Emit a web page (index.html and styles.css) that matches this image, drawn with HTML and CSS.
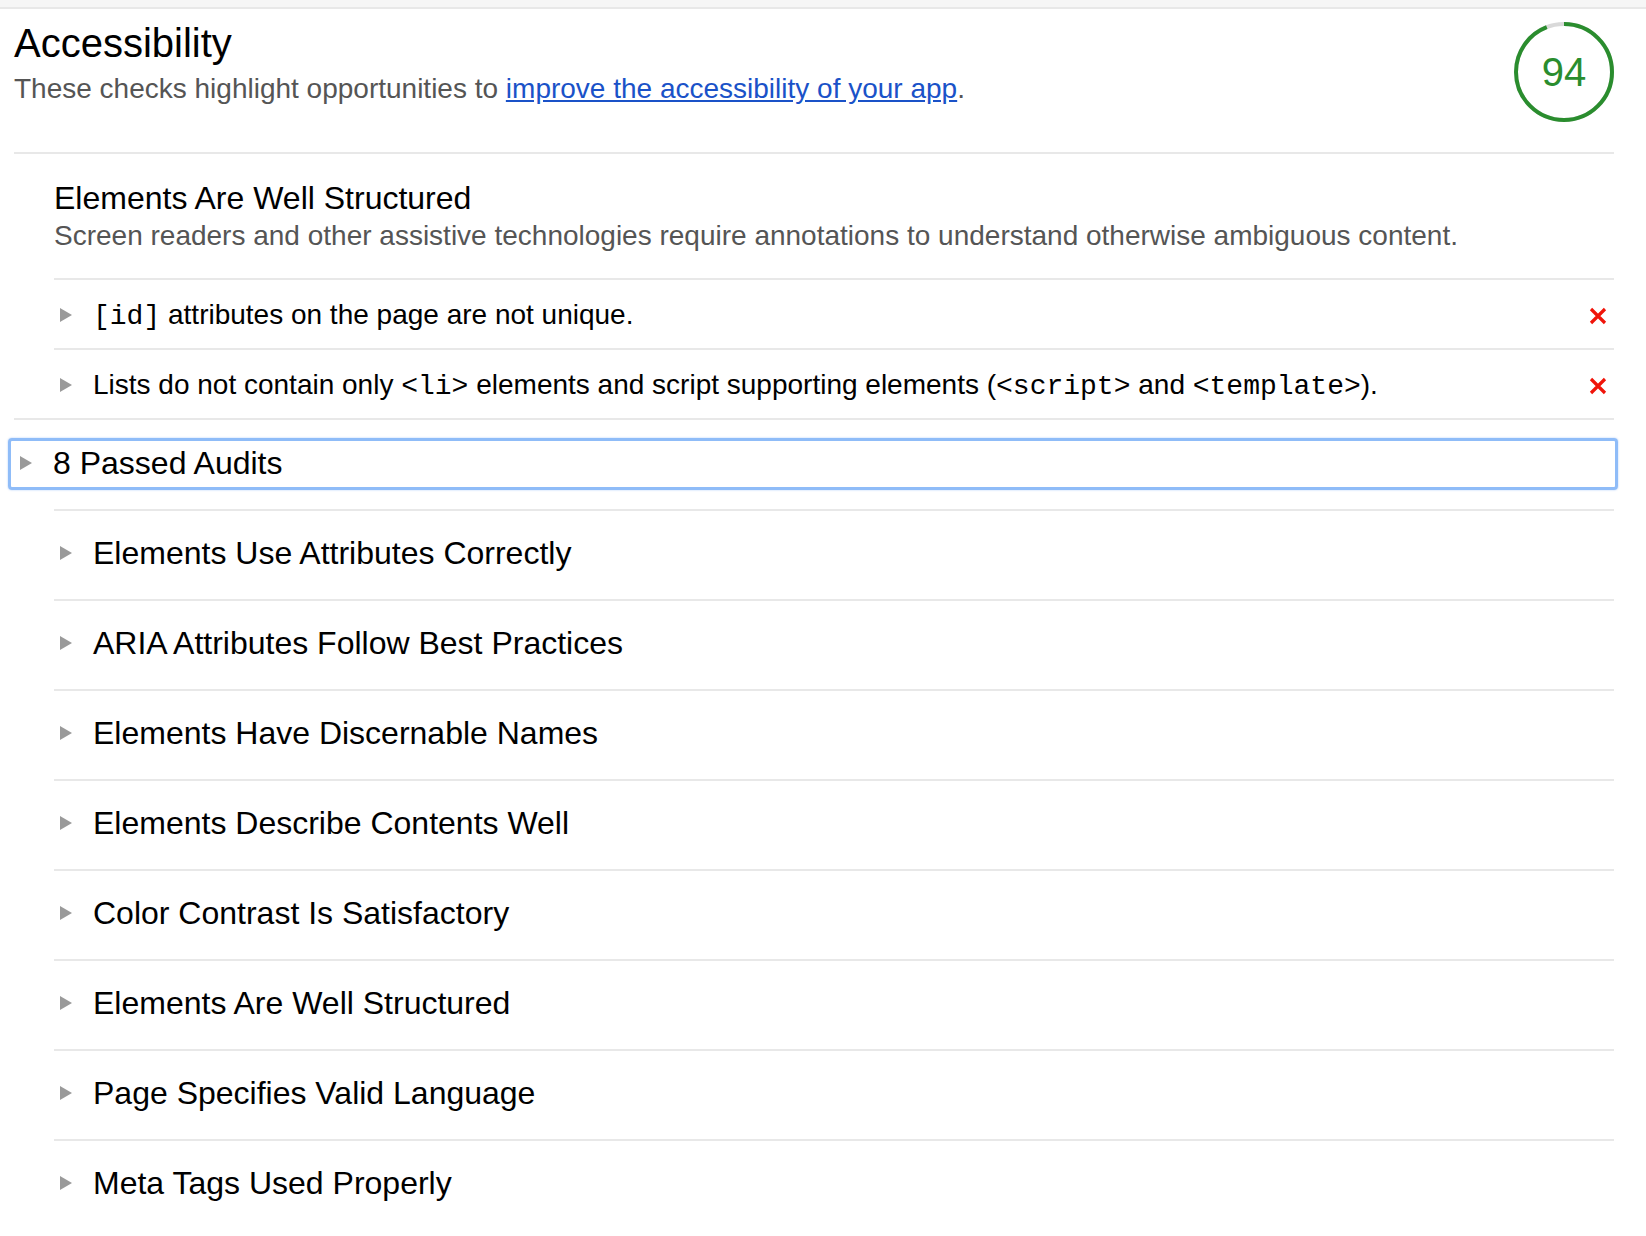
FILE: index.html
```html
<!DOCTYPE html>
<html lang="en">
<head>
<meta charset="utf-8">
<title>Accessibility</title>
<link rel="stylesheet" href="styles.css">
</head>
<body>
<div class="topbar"></div>
<main class="category">
  <header class="cat-header">
    <div class="cat-text">
      <h1 class="cat-title">Accessibility</h1>
      <p class="cat-desc">These checks highlight opportunities to <a href="#" class="link">improve the accessibility of your app</a>.</p>
    </div>
    <div class="gauge">
      <svg class="gauge-ring" viewBox="0 0 100 100" width="100" height="100">
        <circle cx="50" cy="50" r="48" fill="none" stroke="#d9d9d9" stroke-width="4"/>
        <circle cx="50" cy="50" r="48" fill="none" stroke="#2a8d2e" stroke-width="4" stroke-dasharray="283.5 301.6" transform="rotate(-90 50 50)"/>
      </svg>
      <span class="gauge-value">94</span>
    </div>
  </header>

  <section class="group">
    <div class="group-inner">
      <div class="group-header">
        <h2 class="group-title">Elements Are Well Structured</h2>
        <p class="group-desc">Screen readers and other assistive technologies require annotations to understand otherwise ambiguous content.</p>
      </div>
      <div class="audit">
        <span class="tri"></span>
        <span class="audit-text"><code>[id]</code> attributes on the page are not unique.</span>
        <svg class="fail-x" viewBox="0 0 18 18"><path d="M2 2 L16 16 M16 2 L2 16" stroke="#f0140a" stroke-width="3.2" fill="none"/></svg>
      </div>
      <div class="audit">
        <span class="tri"></span>
        <span class="audit-text">Lists do not contain only <code>&lt;li&gt;</code> elements and script supporting elements (<code>&lt;script&gt;</code> and <code>&lt;template&gt;</code>).</span>
        <svg class="fail-x" viewBox="0 0 18 18"><path d="M2 2 L16 16 M16 2 L2 16" stroke="#f0140a" stroke-width="3.2" fill="none"/></svg>
      </div>
    </div>
  </section>

  <section class="passed">
    <div class="passed-summary"><span class="tri tri-summary"></span><span>8 Passed Audits</span></div>
    <div class="passed-list">
      <div class="passed-row"><span class="tri"></span><span>Elements Use Attributes Correctly</span></div>
      <div class="passed-row"><span class="tri"></span><span>ARIA Attributes Follow Best Practices</span></div>
      <div class="passed-row"><span class="tri"></span><span>Elements Have Discernable Names</span></div>
      <div class="passed-row"><span class="tri"></span><span>Elements Describe Contents Well</span></div>
      <div class="passed-row"><span class="tri"></span><span>Color Contrast Is Satisfactory</span></div>
      <div class="passed-row"><span class="tri"></span><span>Elements Are Well Structured</span></div>
      <div class="passed-row"><span class="tri"></span><span>Page Specifies Valid Language</span></div>
      <div class="passed-row"><span class="tri"></span><span>Meta Tags Used Properly</span></div>
    </div>
  </section>
</main>
</body>
</html>
```

FILE: styles.css
```css
* { box-sizing: border-box; }

body {
  margin: 0;
  font-family: "Liberation Sans", Arial, sans-serif;
  color: #000;
  background: #fff;
}

.topbar {
  height: 9px;
  background: #f6f6f6;
  border-bottom: 2px solid #e8e8e8;
}

.category {
  padding: 0 32px 0 14px;
}

.cat-header {
  display: flex;
  justify-content: space-between;
  align-items: flex-start;
  height: 145px;
  padding-top: 10px;
  border-bottom: 2px solid #e8e8e8;
}

.cat-title {
  margin: 0;
  font-size: 40px;
  line-height: 48px;
  font-weight: 400;
}

.cat-desc {
  margin: 5px 0 0;
  font-size: 28px;
  line-height: 34px;
  color: #555;
}

.link {
  color: #1a52c8;
  text-decoration: underline;
}

.gauge {
  display: grid;
  width: 100px;
  height: 100px;
  margin-top: 3px;
}

.gauge > * {
  grid-area: 1 / 1;
}

.gauge-value {
  place-self: center;
  font-size: 40px;
  line-height: 1;
  color: #2a8d2e;
}

.group {
  border-bottom: 2px solid #e8e8e8;
}

.group-inner {
  padding-left: 40px;
}

.group-header {
  padding: 25px 0;
  border-bottom: 2px solid #e8e8e8;
}

.group-title {
  margin: 0;
  font-size: 32px;
  line-height: 38px;
  font-weight: 400;
}

.group-desc {
  margin: 2px 0 0;
  font-size: 28px;
  line-height: 34px;
  color: #555;
}

.audit {
  display: flex;
  align-items: center;
  padding: 18px 0 16px;
  font-size: 28px;
  line-height: 34px;
}

.audit + .audit {
  border-top: 2px solid #e8e8e8;
}

.audit-text {
  flex: 1;
}

code {
  font-family: "Liberation Mono", "Courier New", monospace;
  font-size: 28px;
  line-height: 1;
}

.tri {
  flex: none;
  width: 0;
  height: 0;
  border-left: 12px solid #9a9a9a;
  border-top: 7px solid transparent;
  border-bottom: 7px solid transparent;
  margin-left: 6px;
  margin-right: 21px;
}

.fail-x {
  flex: none;
  width: 18px;
  height: 18px;
  margin: 2px 7px 0 0;
}

.passed {
  margin-top: 18px;
}

.passed-summary {
  display: flex;
  align-items: center;
  margin: 0 -4px 0 -6px;
  padding: 3px 0 5px 9px;
  border: 3px solid #8fbcf8;
  border-radius: 4px;
  box-shadow: 0 0 2px rgba(110, 165, 245, 0.6);
  font-size: 32px;
  line-height: 38px;
}

.tri-summary {
  margin-left: 0;
  margin-right: 21px;
}

.passed-list {
  margin-top: 19px;
  padding-left: 40px;
}

.passed-row {
  display: flex;
  align-items: center;
  border-top: 2px solid #e8e8e8;
  padding: 23px 0 27px;
  font-size: 32px;
  line-height: 38px;
}
```
